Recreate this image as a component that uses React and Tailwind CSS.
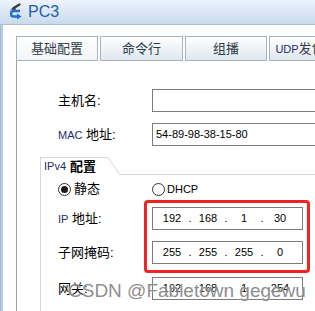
import React from "react";

function TitleIcon() {
  return (
    <svg width="24" height="24" viewBox="0 0 24 24" className="shrink-0">
      <path d="M19.5 4.5 L13.5 8.2" stroke="#3a3a3a" strokeWidth="2.2" fill="none" strokeLinecap="round" />
      <path d="M10.5 9.5 L14.8 6 L15.8 10 Z" fill="#3a3a3a" />
      <path d="M20 11 H13.5 Q11.2 11 11.2 13 V14.5 Q11.2 16.5 13.5 16.5 H18" stroke="#1f6fd0" strokeWidth="2.4" fill="none" />
      <path d="M17 13.5 L21.5 16.5 L17 19.5 Z" fill="#1f6fd0" />
    </svg>
  );
}

function Tab({ label, active, w }) {
  return (
    <div
      className={
        "h-[25px] shrink-0 flex items-center justify-center border border-[#a9b1ba] text-[13px] text-[#2f3b48] " +
        (active
          ? "bg-gradient-to-b from-[#ffffff] to-[#f1f4f8]"
          : "bg-gradient-to-b from-[#ffffff] to-[#dfe7f0]")
      }
      style={{ width: w }}
    >
      {label}
    </div>
  );
}

function IpField({ parts }) {
  return (
    <div className="w-[151px] h-[23px] shrink-0 border border-[#7b7b7b] bg-white flex items-center pl-[4px] text-[11px] text-black">
      {parts.map((p, i) => (
        <React.Fragment key={i}>
          <span className="w-[30px] text-center">{p}</span>
          {i < 3 && <span className="w-[6px] text-center">.</span>}
        </React.Fragment>
      ))}
    </div>
  );
}

function Radio({ checked }) {
  return (
    <span className="w-[13px] h-[13px] rounded-full border border-[#333] bg-white flex items-center justify-center shrink-0">
      {checked && <span className="w-[7px] h-[7px] rounded-full bg-[#1a1a1a]" />}
    </span>
  );
}

export default function App() {
  return (
    <div className="relative w-[315px] h-[311px] overflow-hidden bg-white font-['Liberation_Sans','Noto_Sans_CJK_SC',sans-serif]">
      {/* Title bar */}
      <div className="h-[25px] flex items-center border-b border-[#aabfd8] bg-gradient-to-b from-[#eef4fb] to-[#c8daee]">
        <TitleIcon />
        <span className="ml-[4px] text-[16px] leading-none text-[#1d5fae]">PC3</span>
      </div>

      <div className="flex h-[286px]">
        <div className="w-[3px] shrink-0 bg-gradient-to-r from-[#9fb9d9] to-[#c3d5ea]" />
        <div className="flex-1 min-w-0 pl-[13px] pt-[11px] flex flex-col">
          {/* Tabs */}
          <div className="flex gap-[2px]">
            <Tab label="基础配置" active w={82} />
            <Tab label="命令行" w={83} />
            <Tab label="组播" w={82} />
            <Tab
              label={
                <span className="whitespace-nowrap">
                  <span className="text-[11px] text-[#1c2c6e]">UDP</span>发包
                </span>
              }
              w={62}
            />
          </div>

          {/* Panel */}
          <div className="flex-1 border-l border-[#a0a0a0] pt-[28px] flex flex-col">
            <div className="flex items-center h-[23px] pl-[41px]">
              <span className="w-[94px] shrink-0 text-[13px] text-black">主机名:</span>
              <div className="w-[200px] h-[23px] border border-[#7b7b7b] bg-white shrink-0" />
            </div>
            <div className="flex items-center h-[23px] pl-[41px] mt-[11px]">
              <span className="w-[94px] shrink-0 text-[13px] text-black">
                <span className="text-[11px] text-[#1c2c6e]">MAC</span> 地址:
              </span>
              <div className="w-[200px] h-[23px] border border-[#7b7b7b] bg-white shrink-0 flex items-center pl-[3px] text-[11px] text-black">
                54-89-98-38-15-80
              </div>
            </div>

            {/* IPv4 group */}
            <div className="ml-[23px] mt-[11px] border-l border-[#d6d6d6] flex-1 flex flex-col">
              <div className="flex h-[18px]">
                <div className="w-[67px] shrink-0 border-t border-[#d6d6d6] pl-[3px] flex items-center text-[13px] leading-none">
                  <span className="text-[11px] text-[#1c2c6e]">IPv4</span>
                  <span className="ml-[4px] font-bold text-black">配置</span>
                </div>
                <svg width="12" height="18" className="shrink-0">
                  <line x1="0" y1="0.5" x2="12" y2="17.5" stroke="#d6d6d6" strokeWidth="1" />
                </svg>
                <div className="flex-1 border-b border-[#d6d6d6]" />
              </div>

              <div className="pl-[17px] flex flex-col">
                <div className="flex items-center h-[14px] mt-[7px]">
                  <div className="w-[94px] shrink-0 flex items-center">
                    <Radio checked />
                    <span className="ml-[3px] text-[13px] text-black">静态</span>
                  </div>
                  <div className="flex items-center">
                    <Radio />
                    <span className="ml-[2px] text-[11px] text-black">DHCP</span>
                  </div>
                </div>

                <div className="flex items-center h-[23px] mt-[11px]">
                  <span className="w-[94px] shrink-0 text-[13px] text-black">
                    <span className="text-[11px] text-[#1c2c6e]">IP</span> 地址:
                  </span>
                  <IpField parts={["192", "168", "1", "30"]} />
                </div>
                <div className="flex items-center h-[23px] mt-[11px]">
                  <span className="w-[94px] shrink-0 text-[13px] text-black">子网掩码:</span>
                  <IpField parts={["255", "255", "255", "0"]} />
                </div>
                <div className="flex items-center h-[23px] mt-[13px]">
                  <span className="w-[94px] shrink-0 text-[13px] text-black">网关:</span>
                  <IpField parts={["192", "168", "1", "254"]} />
                </div>
              </div>
            </div>
          </div>
        </div>
      </div>

      {/* red annotation box */}
      <div className="absolute left-[144px] top-[200px] w-[166px] h-[73px] border-[3px] border-[#f22222] rounded-[4px]" />

      {/* watermark */}
      <div className="absolute left-[68px] top-[281px] text-[19px] leading-none text-[rgba(110,110,110,0.8)] [text-shadow:0_0_1px_rgba(255,255,255,0.9)] whitespace-nowrap">
        CSDN @Fabletown gegewu
      </div>
    </div>
  );
}
